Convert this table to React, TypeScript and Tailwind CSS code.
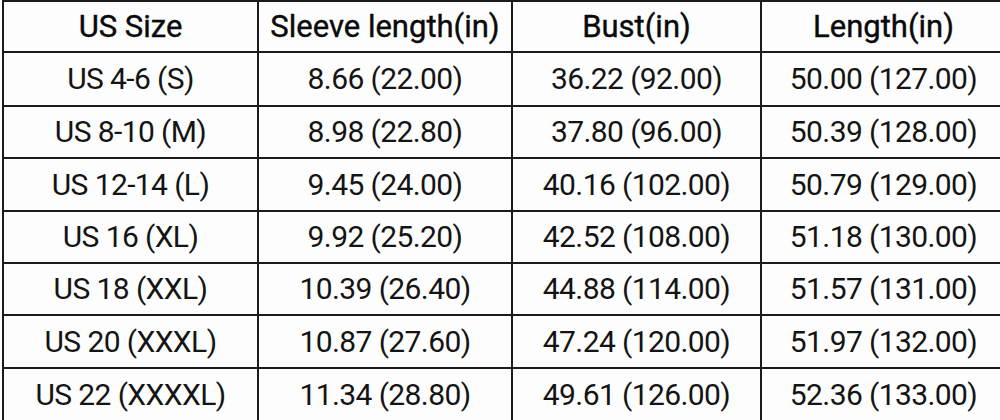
import React from "react";

const header = ["US Size", "Sleeve length(in)", "Bust(in)", "Length(in)"];
const rows = [
  ["US 4-6 (S)", "8.66 (22.00)", "36.22 (92.00)", "50.00 (127.00)"],
  ["US 8-10 (M)", "8.98 (22.80)", "37.80 (96.00)", "50.39 (128.00)"],
  ["US 12-14 (L)", "9.45 (24.00)", "40.16 (102.00)", "50.79 (129.00)"],
  ["US 16 (XL)", "9.92 (25.20)", "42.52 (108.00)", "51.18 (130.00)"],
  ["US 18 (XXL)", "10.39 (26.40)", "44.88 (114.00)", "51.57 (131.00)"],
  ["US 20 (XXXL)", "10.87 (27.60)", "47.24 (120.00)", "51.97 (132.00)"],
  ["US 22 (XXXXL)", "11.34 (28.80)", "49.61 (126.00)", "52.36 (133.00)"],
];

const rowH = [
  "h-[51px]",
  "h-[54px]",
  "h-[52px]",
  "h-[53px]",
  "h-[52px]",
  "h-[52px]",
  "h-[53px]",
  "h-[53px]",
];
const colW = ["w-[255px]", "w-[254px]", "w-[249px]", "w-[245px]"];

function Row({ cells, h, head }: { cells: string[]; h: string; head?: boolean }) {
  return (
    <div className={`flex ${h}`}>
      {cells.map((c, i) => (
        <div
          key={i}
          className={`${colW[i]} shrink-0 flex items-center justify-center border-r-2 border-b-2 border-[#1c1a1a] leading-none ${
            head
              ? "text-[31px] font-normal tracking-[0em] text-[#0a0a0a] [-webkit-text-stroke:0.4px_#0a0a0a]"
              : "text-[30px] font-normal tracking-[-0.02em] text-[#141414]"
          }`}
        >
          {c}
        </div>
      ))}
    </div>
  );
}

export default function App() {
  return (
    <div
      className="w-[1000px] h-[420px] overflow-hidden bg-[#fdfdfd]"
      style={{ fontFamily: 'Roboto, "Noto Sans", sans-serif' }}
    >
      <div className="ml-[2px] w-[1005px] border-l-2 border-t-2 border-[#1c1a1a]">
        <Row cells={header} h={rowH[0]} head />
        {rows.map((r, i) => (
          <Row key={i} cells={r} h={rowH[i + 1]} />
        ))}
      </div>
    </div>
  );
}
